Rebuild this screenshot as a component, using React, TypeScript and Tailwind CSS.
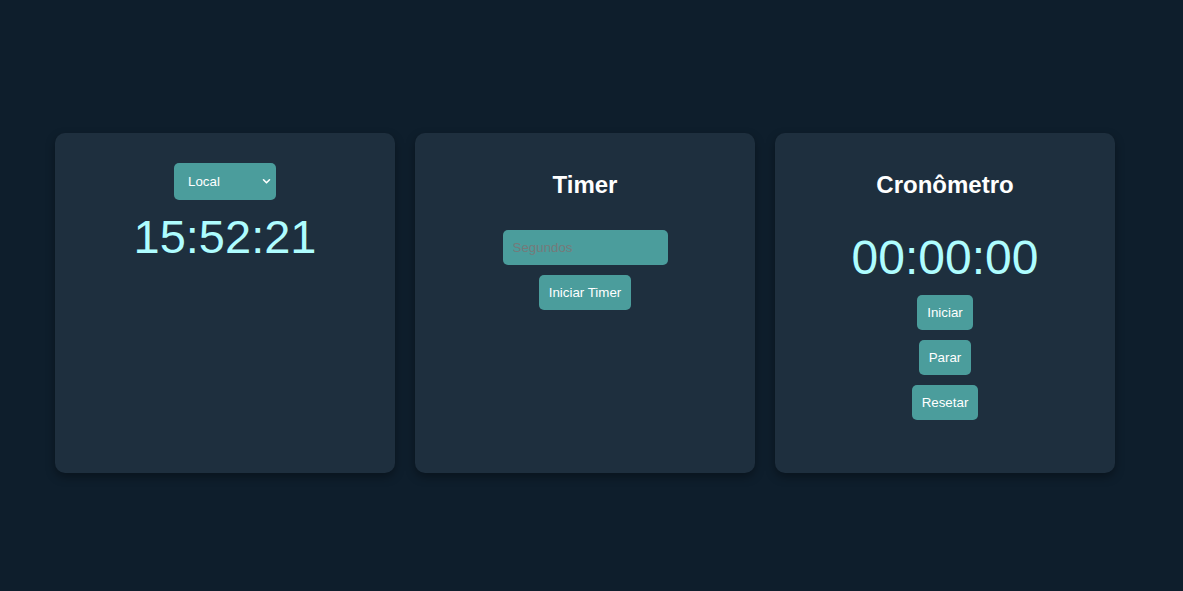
import React from "react";

const btn =
  "bg-[#4b9d9c] text-white rounded-[5px] px-[10px] h-[35px] text-[13.33px] leading-none";

function Chevron() {
  return (
    <svg
      className="absolute right-[5px] top-[15px] pointer-events-none"
      width="9"
      height="7"
      viewBox="0 0 9 7"
      fill="none"
    >
      <path d="M1.5 1.8 L4.5 4.8 L7.5 1.8" stroke="white" strokeWidth="1.6" strokeLinecap="round" strokeLinejoin="round" />
    </svg>
  );
}

export default function App() {
  return (
    <div
      className="min-h-[591px] w-full bg-[#0e1e2c] pl-[55px] pt-[133px]"
      style={{ fontFamily: '"Liberation Sans", Arial, sans-serif' }}
    >
      <div className="flex gap-[20px]">
        <div className="w-[340px] h-[340px] bg-[#1e2f3e] rounded-[10px] shadow-[0_4px_10px_rgba(0,0,0,0.35)] flex flex-col items-center pt-[30px]">
          <div className="relative w-[102px] h-[37px]">
            <select className="appearance-none w-full h-full bg-[#4b9d9c] text-white text-[13.33px] rounded-[5px] pl-[14px] outline-none">
              <option>Local</option>
            </select>
            <Chevron />
          </div>
          <div className="mt-[9px] text-[47px] leading-[55px] text-[#aefdff]">15:52:21</div>
        </div>

        <div className="w-[340px] h-[340px] bg-[#1e2f3e] rounded-[10px] shadow-[0_4px_10px_rgba(0,0,0,0.35)] flex flex-col items-center pt-[38px]">
          <h2 className="text-[24px] font-bold text-white leading-[28px]">Timer</h2>
          <input
            placeholder="Segundos"
            className="mt-[31px] w-[165px] h-[35px] bg-[#4b9d9c] rounded-[5px] px-[10px] text-[13.33px] text-white placeholder:text-[#767a7a] outline-none"
          />
          <button className={btn + " mt-[10px]"}>Iniciar Timer</button>
        </div>

        <div className="w-[340px] h-[340px] bg-[#1e2f3e] rounded-[10px] shadow-[0_4px_10px_rgba(0,0,0,0.35)] flex flex-col items-center pt-[38px]">
          <h2 className="text-[24px] font-bold text-white leading-[28px]">Cronômetro</h2>
          <div className="mt-[31px] text-[48px] leading-[55px] text-[#aefdff]">00:00:00</div>
          <div className="mt-[10px] flex flex-col items-center gap-[10px]">
            <button className={btn}>Iniciar</button>
            <button className={btn}>Parar</button>
            <button className={btn}>Resetar</button>
          </div>
        </div>
      </div>
    </div>
  );
}
